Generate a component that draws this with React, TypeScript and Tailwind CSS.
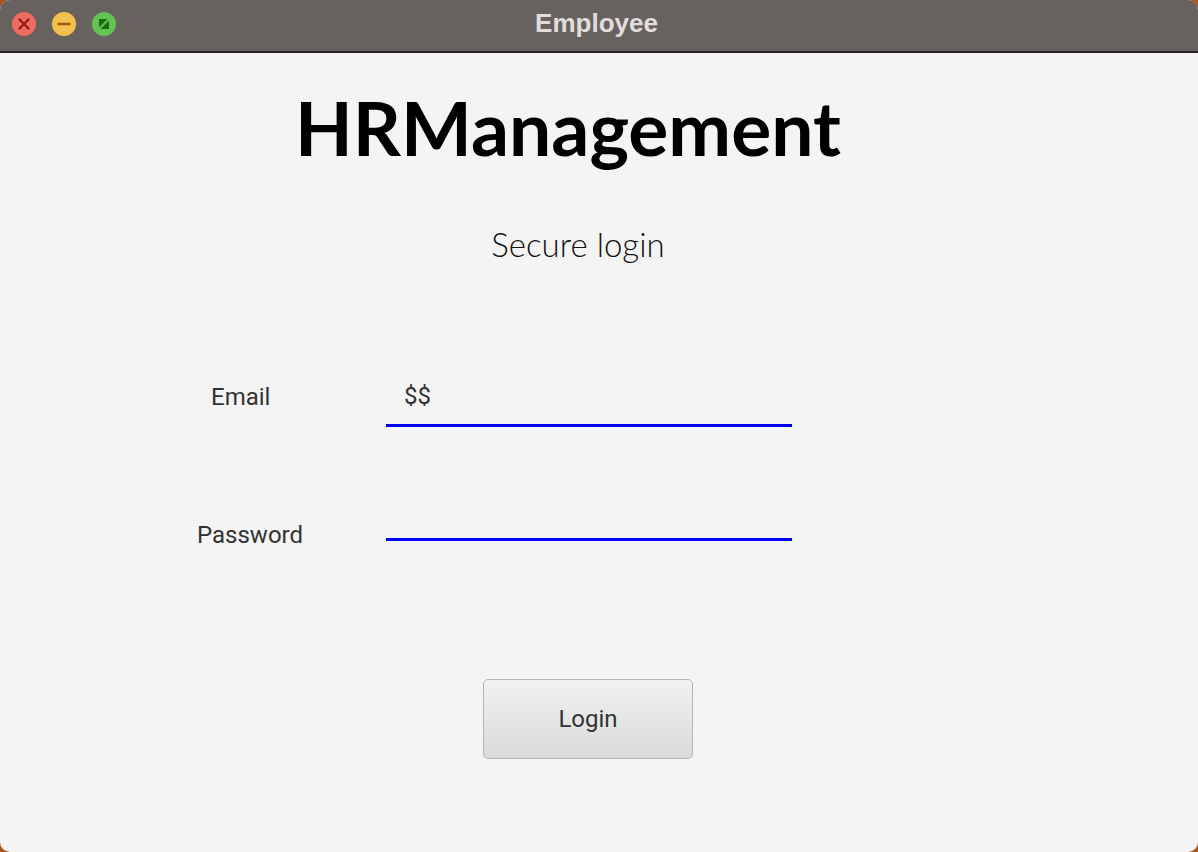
import React from 'react';

const TrafficLights: React.FC = () => (
  <div className="flex gap-4 pl-3 pt-3">
    <svg width="24" height="24" viewBox="0 0 24 24">
      <circle cx="12" cy="12" r="12" fill="#ee6b60" />
      <path d="M7.5 7.5 L16.5 16.5 M16.5 7.5 L7.5 16.5" stroke="#8c1a10" strokeWidth="2.2" strokeLinecap="round" />
    </svg>
    <svg width="24" height="24" viewBox="0 0 24 24">
      <circle cx="12" cy="12" r="12" fill="#f5bf4f" />
      <path d="M6.5 12 L17.5 12" stroke="#95600d" strokeWidth="2.6" strokeLinecap="round" />
    </svg>
    <svg width="24" height="24" viewBox="0 0 24 24">
      <circle cx="12" cy="12" r="12" fill="#61c454" />
      <polygon points="7,7 15.5,7 7,15.5" fill="#1f6a17" />
      <polygon points="17,8.5 17,17 8.5,17" fill="#1f6a17" />
    </svg>
  </div>
);

const Field: React.FC<{ value?: string }> = ({ value }) => (
  <div className="w-[406px] h-[49px] pt-[6px] pl-[18px] border-b-[3px] border-[#0000ff] text-[24px] leading-[24px] text-[#333333]">
    {value}
  </div>
);

export default function App() {
  return (
    <div className="w-[1198px] h-[852px] bg-[#a8561c]" style={{ fontFamily: 'Roboto, "Liberation Sans", sans-serif' }}>
      <div className="w-full h-full rounded-[10px] overflow-hidden bg-[#f4f4f4] flex flex-col">
        <div className="relative h-[53px] bg-[#676160] border-b-2 border-[#262323] shrink-0">
          <TrafficLights />
          <div
            className="absolute inset-x-0 top-0 pt-[10px] pr-[5px] text-center text-[26px] leading-[26px] font-bold text-[#e2dddd]"
            style={{ fontFamily: '"Liberation Sans", Arial, sans-serif' }}
          >
            Employee
          </div>
        </div>

        <div className="flex flex-col">
          <h1
            className="mt-[38px] pr-[62px] text-center text-[75px] leading-[72px] font-bold text-black"
            style={{ fontFamily: 'Lato, "Noto Sans", sans-serif' }}
          >
            HRManagement
          </h1>
          <p
            className="mt-[65px] pr-[42px] text-center text-[33px] leading-[33px] font-light text-[#111111]"
            style={{ fontFamily: 'Lato, "Noto Sans", sans-serif' }}
          >
            Secure login
          </p>

          <div className="mt-[117px] flex items-start">
            <div className="w-[386px] pl-[211px] mt-[7px] text-[24px] leading-[24px] text-[#333333]">Email</div>
            <Field value="$$" />
          </div>
          <div className="mt-[65px] flex items-start h-[49px]">
            <div className="w-[386px] pl-[197px] mt-[31px] text-[24px] leading-[24px] text-[#333333]">Password</div>
            <Field />
          </div>

          <div className="mt-[138px] pl-[483px]">
            <button className="w-[210px] h-[80px] rounded-[5px] border-[1.5px] border-[#b4b4b4] bg-gradient-to-b from-[#f1f1f1] to-[#dadada] text-[24px] leading-[24px] text-[#333333] flex items-center justify-center">
              Login
            </button>
          </div>
        </div>
      </div>
    </div>
  );
}
